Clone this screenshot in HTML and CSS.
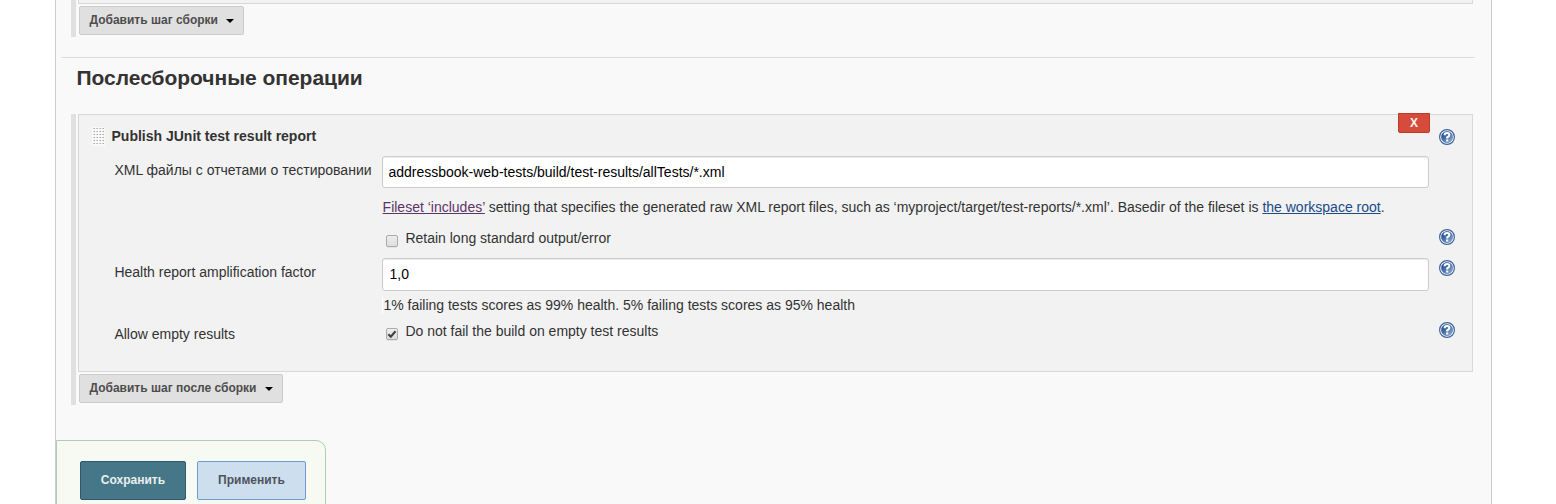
FILE: index.html
```html
<!DOCTYPE html>
<html lang="ru">
<head>
<meta charset="utf-8">
<title>Послесборочные операции</title>
<link rel="stylesheet" href="styles.css">
</head>
<body>
<svg class="defs" width="0" height="0" aria-hidden="true">
  <linearGradient id="blue" x1="0" y1="0" x2="1" y2="1"><stop offset="0.2" stop-color="#27508f"/><stop offset="1" stop-color="#8fb3dc"/></linearGradient>
  <symbol id="help" viewBox="0 0 16 16">
    <circle cx="8" cy="8" r="7.4" fill="#fff" stroke="#3d639b" stroke-width="1.2"/>
    <circle cx="8" cy="8" r="5.7" fill="url(#blue)" stroke="#345b97" stroke-width=".4"/>
    <path d="M5.6 6.2Q5.6 3.9 8 3.9T10.4 6Q10.4 7.1 8.2 8.3V9.6" fill="none" stroke="#fff" stroke-width="2"/>
    <rect x="7.1" y="10.5" width="2.2" height="2" fill="#fff"/>
  </symbol>
</svg>
<main class="panel">
  <section class="group group-first">
    <div class="card card-end"></div>
    <button class="add">Добавить шаг сборки<span class="caret"></span></button>
  </section>
  <h2 class="title">Послесборочные операции</h2>
  <section class="group">
    <div class="card">
      <button class="remove">X</button>
      <div class="row head">
        <div class="name"><svg class="grip"><pattern id="dots" width="3" height="3" patternUnits="userSpaceOnUse"><rect width="3" height="3" fill="#f9f9f9"/><rect x="1" y="1" width="2" height="1" fill="#d0d0d0"/><rect x="2" y="1" width="1" height="1" fill="#a8a8a8"/></pattern><rect width="13" height="19" fill="url(#dots)"/></svg><b>Publish JUnit test result report</b></div>
        <svg class="help"><use href="#help"/></svg>
      </div>
      <div class="row files">
        <label class="label">XML файлы с отчетами о тестировании</label>
        <input class="text" value="addressbook-web-tests/build/test-results/allTests/*.xml">
      </div>
      <div class="row note">
        <p class="field"><a class="visited" href="#">Fileset ‘includes’</a> setting that specifies the generated raw XML report files, such as ‘myproject/target/test-reports/*.xml’. Basedir of the fileset is <a href="#">the workspace root</a>.</p>
      </div>
      <div class="row retain">
        <label class="field check"><span class="box"></span>Retain long standard output/error</label>
        <svg class="help"><use href="#help"/></svg>
      </div>
      <div class="row factor">
        <label class="label">Health report amplification factor</label>
        <input class="text" value="1,0">
        <svg class="help"><use href="#help"/></svg>
      </div>
      <div class="row score"><p class="field"><span class="score-text">1% failing tests scores as 99% health. 5% failing tests scores as 95% health</span></p></div>
      <div class="row empty">
        <label class="label">Allow empty results</label>
        <label class="field check"><span class="box"><svg class="tick" viewBox="0 0 10 10"><path d="M1.3 5.2 3.8 7.7 8.5 2.2" fill="none" stroke="#404040" stroke-width="2.1"/></svg></span>Do not fail the build on empty test results</label>
        <svg class="help"><use href="#help"/></svg>
      </div>
    </div>
    <button class="add add-post">Добавить шаг после сборки<span class="caret"></span></button>
  </section>
  <footer class="actions">
    <button class="save">Сохранить</button>
    <button class="apply">Применить</button>
  </footer>
</main>
</body>
</html>
```
FILE: styles.css
```css
* { box-sizing: border-box; }
body { margin: 0; height: 504px; overflow: hidden; background: #fff; color: #333; font: 14px/20px "Liberation Sans", Arial, sans-serif; }
p { margin: 0; }
button { font: bold 12px/14px "Liberation Sans", Arial, sans-serif; padding: 0; white-space: nowrap; }
.defs { position: absolute; }
.panel { width: 1437px; height: 504px; margin-left: 55px; background: #f9f9f9; border: solid #ccc; border-width: 0 1px; overflow: hidden; display: flex; flex-direction: column; }
.group { margin: 0 18px 0 15px; padding-left: 2px; border-left: 5px solid #e0e0e0; height: 291px; flex: none; }
.group-first { height: 37px; }
.card { position: relative; height: 258px; border: 1px solid #d8d8d8; background: #f2f2f2; }
.card-end { height: 4px; border-top: 0; }
.add { display: flex; align-items: center; justify-content: space-between; width: 165px; height: 29px; margin: 2px 0 0 1px; padding: 0 9px 2px 9.5px; background: #e0e0e0; border: 1px solid #ccc; border-radius: 2px; color: #4d4d4d; }
.add-post { width: 204px; }
.caret { border: 4px solid transparent; border-top-color: #000; border-bottom: 0; margin-top: 2px; }
.title { margin: 20px 16px 0 5px; padding: 8px 0 0 15.5px; height: 57px; border-top: 1px solid #ddd; font-size: 21px; line-height: 24px; letter-spacing: -.03px; white-space: nowrap; flex: none; }
.remove { position: absolute; top: -2px; right: 42px; width: 32px; height: 20px; background: #d54c3a; border: 1px solid #c0392b; border-radius: 0 0 2px 2px; color: #f5f5f5; }
.row { display: grid; grid-template-columns: 303px 1047px 16px; white-space: nowrap; align-items: start; }
.row > .label { grid-column: 1; padding-left: 35.4px; }
.row > .field, .row > .text { grid-column: 2; }
.row > .help { grid-column: 3; }
.help { width: 16px; height: 16px; margin-left: 10px; }
.head { height: 41px; padding-top: 11px; }
.head .name { display: flex; align-items: center; gap: 6.5px; padding-left: 13px; }
.head .help { margin-top: 3px; }
.grip { width: 13px; height: 19px; margin-top: 1px; }
.files { height: 32px; }
.files .label, .factor .label { padding-top: 4px; }
.text { width: 1047px; height: 32px; border: 1px solid #ccc; border-radius: 3px; padding: 0 5px 0 5.4px; font: 14px "Liberation Sans", Arial, sans-serif; color: #000; background: #fff; box-shadow: inset 0 1px 1px #ececec; }
.note { height: 39px; padding-top: 9px; }
.note .field { padding-left: .6px; }
a { color: #204a87; text-decoration: underline; }
.visited { color: #5c3566; }
.retain { height: 31px; padding-top: 1px; }
.retain .help { margin-top: 1px; }
.check { display: flex; align-items: flex-start; gap: 7.4px; padding-left: 4px; }
.box { width: 12px; height: 12px; margin-top: 7px; border: 1px solid #aaa; border-radius: 2px; background: linear-gradient(#eee, #ddd); display: flex; box-shadow: 0 1px 0 #e4e4e4; }
.tick { width: 10px; height: 10px; }
.factor { height: 33px; }
.factor .text { height: 33px; padding: 0 5px 1px 6.5px; }
.factor .help { margin-top: 2px; }
.score { height: 29px; padding-top: 6px; }
.score .field { border-left: 1px solid #fff; height: 17px; line-height: 17px; }
.score-text { padding-left: .4px; }
.empty .label { padding-top: 4px; }
.empty .check { padding-top: 1px; }
.empty .help { margin-top: 2px; }
.actions { width: 270px; height: 80px; flex: none; margin-top: 35px; padding: 20px 0 0 23px; display: flex; align-items: flex-start; gap: 11px; background: #f6faf2; border: 1px solid #a9cfba; border-radius: 0 10px 0 0; }
.save, .apply { height: 39px; padding-bottom: 2px; border-radius: 2px; }
.save { width: 106px; background: #457789; border: 1px solid #30586a; color: #eee; }
.apply { width: 109px; background: #cddeee; border: 1px solid #6d9dce; color: #4d545d; }
```
